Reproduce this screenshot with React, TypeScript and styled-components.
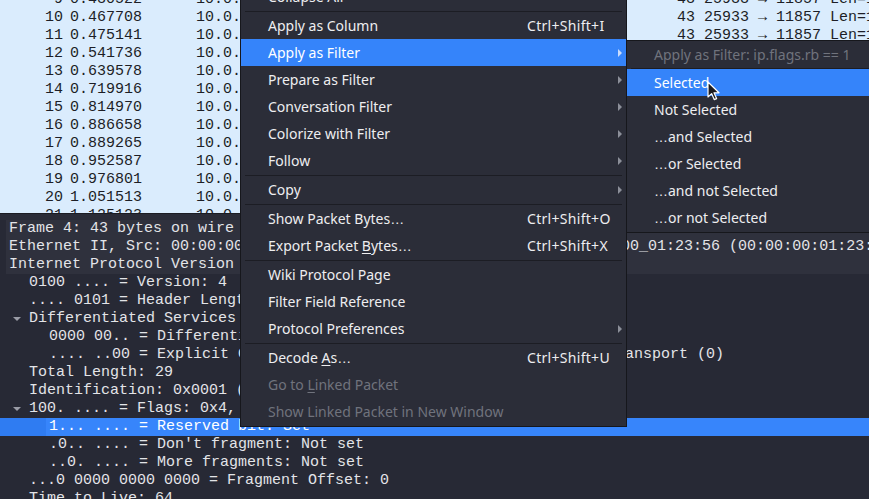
import styled, { createGlobalStyle } from "styled-components";

const GlobalStyle = createGlobalStyle`
  html, body {
    margin: 0;
    padding: 0;
    background: #272935;
    overflow: hidden;
  }
  #root {
    width: 869px;
    height: 499px;
  }
`;

type packet = { no: number; time: string };

const packets: packet[] = [
    { no: 9, time: "0.430522" },
    { no: 10, time: "0.467708" },
    { no: 11, time: "0.475141" },
    { no: 12, time: "0.541736" },
    { no: 13, time: "0.639578" },
    { no: 14, time: "0.719916" },
    { no: 15, time: "0.814970" },
    { no: 16, time: "0.886658" },
    { no: 17, time: "0.889265" },
    { no: 18, time: "0.952587" },
    { no: 19, time: "0.976801" },
    { no: 20, time: "1.051513" },
    { no: 21, time: "1.125123" },
];

type treeNode = { text: string; depth: number; open?: boolean; shaded?: boolean; selected?: boolean };

const tree: treeNode[] = [
    { text: "Frame 4: 43 bytes on wire (344 bits), 43 bytes captured (344 bits)", depth: 0, shaded: true },
    { text: "Ethernet II, Src: 00:00:00_00:00:00 (00:00:00:00:00:00), Dst: 00:00:00_01:23:56 (00:00:00:01:23:56)", depth: 0, shaded: true },
    { text: "Internet Protocol Version 4, Src: 10.0.0.1, Dst: 10.0.0.2", depth: 0, shaded: true },
    { text: "0100 .... = Version: 4", depth: 1 },
    { text: ".... 0101 = Header Length: 20 bytes (5)", depth: 1 },
    { text: "Differentiated Services Field: 0x00 (DSCP: CS0, ECN: Not-ECT)", depth: 1, open: true },
    { text: "0000 00.. = Differentiated Services Codepoint: Default (0)", depth: 2 },
    { text: ".... ..00 = Explicit Congestion Notification: Not ECN-Capable Transport (0)", depth: 2 },
    { text: "Total Length: 29", depth: 1 },
    { text: "Identification: 0x0001 (1)", depth: 1 },
    { text: "100. .... = Flags: 0x4, Reserved bit", depth: 1, open: true },
    { text: "1... .... = Reserved bit: Set", depth: 2, selected: true },
    { text: ".0.. .... = Don't fragment: Not set", depth: 2 },
    { text: "..0. .... = More fragments: Not set", depth: 2 },
    { text: "...0 0000 0000 0000 = Fragment Offset: 0", depth: 1 },
    { text: "Time to Live: 64", depth: 1 },
];

type menuEntry =
    | { sep: true }
    | { sep?: false; label: string; mnemonic?: number; shortcut?: string; sub?: boolean; active?: boolean; disabled?: boolean };

// mnemonic = index of the underlined letter
const menu: menuEntry[] = [
    { label: "Collapse All" },
    { sep: true },
    { label: "Apply as Column", shortcut: "Ctrl+Shift+I" },
    { label: "Apply as Filter", sub: true, active: true },
    { label: "Prepare as Filter", sub: true },
    { label: "Conversation Filter", sub: true },
    { label: "Colorize with Filter", sub: true },
    { label: "Follow", sub: true },
    { sep: true },
    { label: "Copy", sub: true },
    { sep: true },
    { label: "Show Packet Bytes…", shortcut: "Ctrl+Shift+O" },
    { label: "Export Packet Bytes…", mnemonic: 14, shortcut: "Ctrl+Shift+X" },
    { sep: true },
    { label: "Wiki Protocol Page" },
    { label: "Filter Field Reference" },
    { label: "Protocol Preferences", sub: true },
    { sep: true },
    { label: "Decode As…", mnemonic: 7, shortcut: "Ctrl+Shift+U" },
    { label: "Go to Linked Packet", mnemonic: 6, disabled: true },
    { label: "Show Linked Packet in New Window", disabled: true },
];

const filterItems = ["Selected", "Not Selected", "…and Selected", "…or Selected", "…and not Selected", "…or not Selected"];

// the menu font draws "…" wider than Noto Sans does
const withEllipsis = (text: string) => {
    const parts = text.split("…");
    return parts.map((part, i) => (
        <span key={i}>
            {i > 0 && <Ellipsis>…</Ellipsis>}
            {part}
        </span>
    ));
};

const renderLabel = (label: string, mnemonic?: number) => {
    if (mnemonic === undefined) return withEllipsis(label);
    return (
        <>
            {label.slice(0, mnemonic)}
            <Mnemonic>{label[mnemonic]}</Mnemonic>
            {withEllipsis(label.slice(mnemonic + 1))}
        </>
    );
};

const App = () => {
    return (
        <>
            <GlobalStyle />
            <Window>
                <PacketPane>
                    <PacketRows>
                        {packets.map((p) => (
                            <PacketRow key={p.no}>
                                <Cell $right>{p.no}</Cell>
                                <Cell $pad={7}>{p.time}</Cell>
                                <Cell>10.0.0.1</Cell>
                                <Cell>10.0.0.2</Cell>
                                <Cell>UDP</Cell>
                                <Cell $right>43</Cell>
                                <Cell $pad={9}>25933 → 11857 Len=1</Cell>
                            </PacketRow>
                        ))}
                    </PacketRows>
                </PacketPane>

                <Splitter />

                <TreePane>
                    {tree.map((node, index) => (
                        <TreeRow key={index} $depth={node.depth} $shaded={node.shaded} $selected={node.selected}>
                            {node.depth > 0 && <Twisty>{node.open ? <DownArrow /> : null}</Twisty>}
                            <span>{node.text}</span>
                        </TreeRow>
                    ))}
                </TreePane>

                <ContextMenu>
                    {menu.map((entry, index) =>
                        entry.sep ? (
                            <Separator key={index} />
                        ) : (
                            <MenuItem key={index} $active={entry.active} $disabled={entry.disabled}>
                                <ItemLabel>{renderLabel(entry.label, entry.mnemonic)}</ItemLabel>
                                <Shortcut>{entry.shortcut}</Shortcut>
                                <SubArrow $visible={!!entry.sub} $active={entry.active} />
                            </MenuItem>
                        )
                    )}
                </ContextMenu>

                <SubMenu>
                    <MenuItem $disabled>Apply as Filter: ip.flags.rb == 1</MenuItem>
                    <SubSeparator />
                    {filterItems.map((label, index) => (
                        <MenuItem key={label} $active={index === 0}>{withEllipsis(label)}</MenuItem>
                    ))}
                </SubMenu>

                <Pointer width="14" height="21" viewBox="0 0 14 21">
                    <path d="M1 1 L1 16 L4.6 12.6 L7.2 18.6 L9.6 17.6 L7 11.8 L12 11.8 Z" fill="#1b1b1f" stroke="#ffffff" strokeWidth="1.2" strokeLinejoin="round" />
                </Pointer>
            </Window>
        </>
    );
};

export default App;

const Window = styled.div`
    position: relative;
    width: 869px;
    height: 499px;
    overflow: hidden;
    display: flex;
    flex-direction: column;
    font-family: "Liberation Mono", monospace;
    font-size: 15px;
`

const PacketPane = styled.div`
    height: 213px;
    flex-shrink: 0;
    overflow: hidden;
    background-color: #daecfd;
    color: #1d1e26;
`

const PacketRows = styled.div`
    margin-top: -9px;
`

const PacketRow = styled.div`
    display: grid;
    grid-template-columns: 63px 133px 160px 160px 100px 79px 1fr;
    height: 18px;
    line-height: 18px;
    white-space: nowrap;
`

const Cell = styled.span<{ $right?: boolean; $pad?: number }>`
    text-align: ${(p) => (p.$right ? "right" : "left")};
    padding-left: ${(p) => p.$pad ?? 0}px;
    overflow: hidden;
`

const Splitter = styled.div`
    height: 7px;
    flex-shrink: 0;
    background-color: #2a2c37;
    border-top: 1px solid #1b1c22;
    box-sizing: border-box;
`

const TreePane = styled.div`
    flex: 1;
    overflow: hidden;
    background-color: #272935;
    color: #e3e4e8;
`

const TreeRow = styled.div<{ $depth: number; $shaded?: boolean; $selected?: boolean }>`
    display: flex;
    align-items: center;
    height: 18px;
    line-height: 18px;
    white-space: nowrap;
    margin-left: ${(p) => (p.$shaded ? 6 : 0)}px;
    padding-left: ${(p) => (p.$depth === 0 ? (p.$shaded ? 3 : 9) : 9 + 20 * (p.$depth - 1))}px;
    background: ${(p) =>
        p.$selected
            ? "linear-gradient(to right, #2f7cf2 46px, #3785fb 46px)"
            : p.$shaded
            ? "#2f313d"
            : "transparent"};
    color: ${(p) => (p.$selected ? "#ffffff" : "inherit")};
`

const Twisty = styled.span`
    width: 20px;
    flex-shrink: 0;
    display: flex;
    align-items: center;
`

const DownArrow = styled.span`
    margin-left: 4px;
    width: 0;
    height: 0;
    border-left: 4px solid transparent;
    border-right: 4px solid transparent;
    border-top: 4px solid #9a9ca6;
`

const ContextMenu = styled.div`
    position: absolute;
    left: 240px;
    top: -19px;
    width: 387px;
    box-sizing: border-box;
    padding: 1px 0;
    background-color: #2b2d38;
    border: 1px solid #16171c;
    font-family: "Noto Sans", sans-serif;
    font-size: 14px;
    color: #eeeef0;
    z-index: 5;
`

const SubMenu = styled(ContextMenu)`
    left: 626px;
    top: 40px;
    width: 270px;
    padding-top: 0;
    border-right: none;
    z-index: 6;
`

const MenuItem = styled.div<{ $active?: boolean; $disabled?: boolean }>`
    display: flex;
    align-items: center;
    height: 27px;
    padding-left: 27px;
    white-space: nowrap;
    background-color: ${(p) => (p.$active ? "#3584fa" : "transparent")};
    color: ${(p) => (p.$disabled ? "#70737d" : p.$active ? "#ffffff" : "inherit")};
`

const ItemLabel = styled.span`
    flex: 0 0 259px;
`

const Shortcut = styled.span`
    flex: 1;
    letter-spacing: 0.3px;
`

const SubArrow = styled.span<{ $visible: boolean; $active?: boolean }>`
    width: 0;
    height: 0;
    margin-right: 4px;
    border-top: 4px solid transparent;
    border-bottom: 4px solid transparent;
    border-left: 4px solid ${(p) => (p.$visible ? (p.$active ? "#c9dbfb" : "#8c8f99") : "transparent")};
`

const Ellipsis = styled.span`
    font-family: "Liberation Sans", sans-serif;
`

const Mnemonic = styled.u`
    text-decoration-thickness: 1px;
    text-underline-offset: 2px;
`

const Separator = styled.div`
    height: 1px;
    margin: 1px 4px 0;
    background-color: #1c1d24;
`

const SubSeparator = styled.div`
    height: 1px;
    margin: 0 0 0 4px;
    background-color: #1c1d24;
`

const Pointer = styled.svg`
    position: absolute;
    left: 707px;
    top: 81px;
    z-index: 10;
`
